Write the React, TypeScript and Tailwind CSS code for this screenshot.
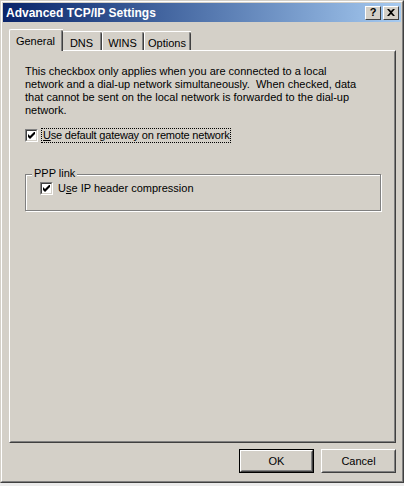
import React from 'react';

const font = { fontFamily: '"Liberation Sans", Arial, sans-serif' };

const CheckBox: React.FC = () => (
  <div className="w-[13px] h-[13px] shrink-0 border border-t-[#808080] border-l-[#808080] border-r-white border-b-white">
    <div className="w-full h-full border border-t-[#404040] border-l-[#404040] border-r-[#d4d0c8] border-b-[#d4d0c8] bg-white flex items-center justify-center">
      <svg width="7" height="7" viewBox="0 0 7 7">
        <path d="M0 2v3l2 2 5-5V-1L2 4z" fill="#000" />
      </svg>
    </div>
  </div>
);

const Tab: React.FC<{ label: string; width: number; selected?: boolean }> = ({ label, width, selected }) => (
  <div
    className={
      selected
        ? 'relative z-10 h-[22px] -mr-[1px] bg-[#d4d0c8] border-t border-l border-white rounded-tl-[2px] flex'
        : 'h-[19px] mt-[2px] bg-[#d4d0c8] border-t border-l border-white rounded-tl-[2px] flex'
    }
    style={{ width }}
  >
    <div className="flex-1 flex items-start justify-center pt-[3px] text-[11px] text-black">{label}</div>
    <div className="w-[2px] flex border-r border-[#404040] rounded-tr-[2px]">
      <div className="w-[1px] mt-[1px] bg-[#808080]" />
    </div>
  </div>
);

const Button: React.FC<{ label: string; isDefault?: boolean }> = ({ label, isDefault }) => (
  <div className={isDefault ? 'w-[75px] h-[24px] border border-black' : 'w-[75px] h-[24px]'}>
    <div className="w-full h-full border border-t-white border-l-white border-r-[#404040] border-b-[#404040]">
      <div className="w-full h-full border border-t-[#d4d0c8] border-l-[#d4d0c8] border-r-[#808080] border-b-[#808080] flex items-center justify-center text-[11px] text-black">
        {label}
      </div>
    </div>
  </div>
);

export default function App() {
  return (
    <div className="w-[404px] h-[486px] bg-[#ececec] overflow-hidden" style={font}>
      <div className="w-[404px] h-[483px] border border-t-[#d4d0c8] border-l-[#d4d0c8] border-r-[#404040] border-b-[#404040]">
        <div className="w-full h-full border border-t-white border-l-white border-r-[#808080] border-b-[#808080] bg-[#d4d0c8] flex flex-col px-[1px] pt-[1px]">
          {/* title bar */}
          <div className="h-[19px] flex items-center bg-gradient-to-r from-[#0a246a] to-[#a6caf0] pl-[3px] pr-[2px]">
            <span className="text-white font-bold text-[12px] leading-none">
              Advanced TCP/IP Settings
            </span>
            <div className="ml-auto flex gap-[2px]">
              <div className="w-[16px] h-[14px] bg-[#d4d0c8] border border-t-white border-l-white border-r-[#404040] border-b-[#404040] flex items-center justify-center text-[11px] font-bold leading-none text-black">?</div>
              <div className="w-[16px] h-[14px] bg-[#d4d0c8] border border-t-white border-l-white border-r-[#404040] border-b-[#404040] flex items-center justify-center">
                <svg width="8" height="7" viewBox="0 0 8 7">
                  <path d="M0 0h2l2 2 2-2h2L5 3.5 8 7H6L4 5 2 7H0l3-3.5z" fill="#000" />
                </svg>
              </div>
            </div>
          </div>

          {/* tabs */}
          <div className="flex pl-[6px] pt-[7px] h-[29px]">
            <Tab label="General" width={54} selected />
            <Tab label="DNS" width={40} />
            <Tab label="WINS" width={42} />
            <Tab label="Options" width={47} />
          </div>

          {/* panel */}
          <div className="ml-[6px] mr-[5px] -mt-[1px] h-[393px] border border-t-white border-l-white border-r-[#404040] border-b-[#404040]">
            <div className="w-full h-full border border-t-[#d4d0c8] border-l-[#d4d0c8] border-r-[#808080] border-b-[#808080] pl-[14px] pr-[12px] pt-[13px] text-[11px] text-black">
              <p className="leading-[13px] w-[340px]">
                This checkbox only applies when you are connected to a local network and a dial-up network simultaneously.&nbsp; When checked, data that cannot be sent on the local network is forwarded to the dial-up network.
              </p>
              <div className="flex items-center mt-[10px] h-[16px]">
                <CheckBox />
                <span className="ml-[3px] px-[1px] border border-dotted border-black leading-[13px] tracking-[-0.2px]">
                  <u>U</u>se default gateway on remote network
                </span>
              </div>
              <div className="mt-[31px] mr-[1px] h-[37px] border border-[#808080] shadow-[1px_1px_0_#fff,inset_1px_1px_0_#fff] relative">
                <span className="absolute -top-[8px] left-[6px] px-[2px] bg-[#d4d0c8] leading-[13px]">PPP link</span>
                <div className="flex items-center ml-[14px] mt-[7px]">
                  <CheckBox />
                  <span className="ml-[5px] leading-[13px]">
                    U<u>s</u>e IP header compression
                  </span>
                </div>
              </div>
            </div>
          </div>

          {/* buttons */}
          <div className="flex justify-end gap-[7px] pr-[5px] pt-[6px]">
            <Button label="OK" isDefault />
            <Button label="Cancel" />
          </div>
        </div>
      </div>
    </div>
  );
}
